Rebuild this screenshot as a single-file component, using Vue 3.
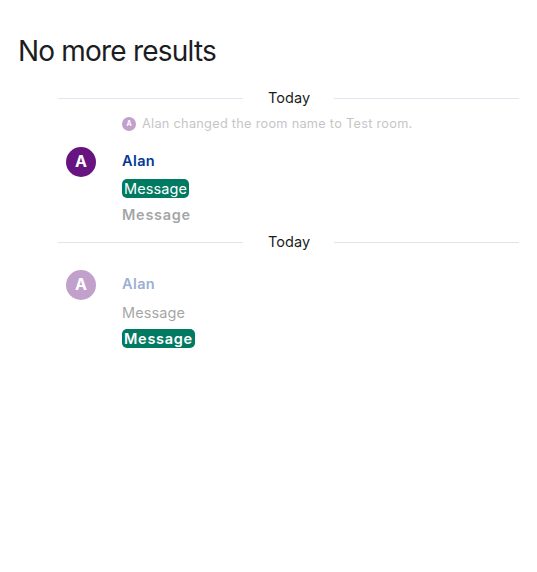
<script setup>
const groups = [
  {
    date: 'Today',
    notice: 'Alan changed the room name to Test room.',
    faded: false,
    sender: 'Alan',
    messages: [
      { text: 'Message', hit: true, bold: false },
      { text: 'Message', hit: false, bold: true },
    ],
  },
  {
    date: 'Today',
    faded: true,
    sender: 'Alan',
    messages: [
      { text: 'Message', hit: false, bold: false },
      { text: 'Message', hit: true, bold: true },
    ],
  },
]
</script>

<template>
  <main class="panel">
    <h2 class="title">No more results</h2>
    <section v-for="(g, i) in groups" :key="i" class="group" :class="{ second: i === 1 }">
      <div class="separator"><hr /><h3>{{ g.date }}</h3><hr /></div>
      <div v-if="g.notice" class="notice">
        <span class="avatar small">A</span><span>{{ g.notice }}</span>
      </div>
      <div class="event" :class="{ faded: g.faded }">
        <span class="avatar">A</span>
        <div class="body">
          <div class="sender">{{ g.sender }}</div>
          <div v-for="(m, j) in g.messages" :key="j" class="line" :class="{ dim: !m.hit, bold: m.bold }">
            <span :class="{ hit: m.hit }">{{ m.text }}</span>
          </div>
        </div>
      </div>
    </section>
  </main>
</template>

<style>
body { margin: 0; background: #fff; }
</style>

<style scoped>
.panel { box-sizing: border-box; height: 572px; padding: 33px 18px 0; font-family: Inter, sans-serif; font-size: 15px; color: #1b1d22; }
.title { margin: 0; font-size: 28px; line-height: 36px; font-weight: 400; letter-spacing: -.8px; }
.group { margin-left: 40px; padding-top: 18px; }
.second { padding-top: 1px; }
.separator { display: flex; align-items: center; height: 22px; }
.separator hr { flex: 1; height: 0; margin: 0; border: 0; border-top: 1px solid #e3e8f0; }
.second .separator hr { border-top-color: #e3e4e6; }
.separator h3 { width: 42px; margin: 0 24px 0 25px; font-size: 14.5px; line-height: 22px; font-weight: 400; letter-spacing: .05px; white-space: nowrap; }
.notice { display: flex; align-items: center; gap: 6px; height: 18px; margin: 6px 0 0 64px; font-size: 12.75px; line-height: 16px; letter-spacing: .27px; opacity: .4; color: #6c7076; }
.notice > span:last-child { padding-bottom: 1px; }
.avatar { display: flex; flex: none; align-items: center; justify-content: center; box-sizing: border-box; width: 30px; height: 30px; padding-bottom: 2px; border-radius: 50%; background: #671481; color: #fff; font-size: 16px; font-weight: 700; letter-spacing: 0; }
.notice .small { width: 14px; height: 14px; padding: 0; font-size: 7px; line-height: 14px; }
.event { display: flex; gap: 26px; padding: 14px 0 3px 8px; }
.second .event { padding-top: 17px; }
.sender { height: 28px; line-height: 28px; font-size: 14.5px; font-weight: 600; color: #043894; letter-spacing: .4px; }
.line { height: 26px; line-height: 27px; font-size: 14.5px; letter-spacing: .1px; }
.second .line { height: 27px; line-height: 30px; }
.second .line:last-child { height: 26px; line-height: 28px; }
.dim { opacity: .4; }
.line.bold { font-size: 14.5px; font-weight: 600; letter-spacing: .72px; }
.hit { display: inline-block; box-sizing: border-box; height: 19px; line-height: 19px; padding: 0 2px; border-radius: 5px; background: #007a61; color: #fff; }
.faded .avatar, .faded .sender { opacity: .4; }
</style>
